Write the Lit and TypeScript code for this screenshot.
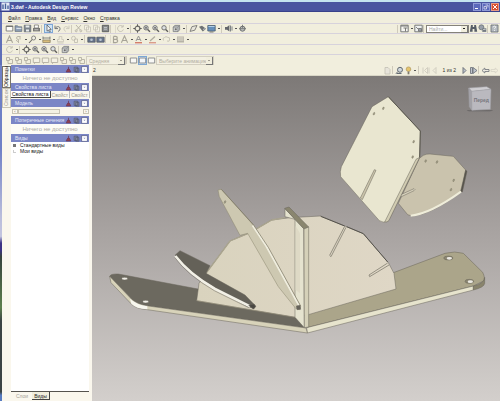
import { LitElement, html, svg, css, nothing } from "lit";
import { customElement, property } from "lit/decorators.js";

const zoomGlyph = (inner: unknown) => svg`<circle cx="4" cy="3.8" r="2.2" fill="#d9dde4" stroke="#555" stroke-width=".9"/><path d="M5.6 5.4 8 7.8" stroke="#444" stroke-width="1.4"/>${inner}`;
const markup = svg`<path d="M1.5 1.5h3v3h-3zM3 4.5v3h4.5v-4H5" fill="none" stroke="#aaa698" stroke-width=".9"/>`;

const glyphs: Record<string, unknown> = {
  page: svg`<path d="M1.2 2h6.6v5H1.2z" fill="#fff" stroke="#666" stroke-width=".9"/><path d="M1.2 2.4h6.6" stroke="#555"/>`,
  open: svg`<path d="M1 7.4V1.8h2.6l1 1h3.2v4.6z" fill="#7f93b0" stroke="#4b5566" stroke-width=".7"/><path d="M2.4 4.4h5" stroke="#dfe6f0"/>`,
  save: svg`<path d="M1.2 1.2h6.6v6.6H1.2z" fill="#66707f" stroke="#444b58" stroke-width=".6"/><path d="M2.6 1.5h3.8v2H2.6zM3 5.4h3v2H3z" fill="#e8ebee"/>`,
  print: svg`<path d="M2.4 1h4v3h-4z" fill="#fff" stroke="#555" stroke-width=".7"/><path d="M1 4h7v3.4H1z" fill="#626262"/><path d="M2.4 5.8h4" stroke="#eee" stroke-width=".7"/>`,
  cursor: svg`<path d="M3 1v6.2l1.4-1.2 1 2 1-.5-1-1.9 1.8-.2z" fill="#fff" stroke="#333" stroke-width=".7"/>`,
  undo: svg`<path d="M2 1.6v3h3M2.2 4.4C4 1.6 7 2.4 7 4.6S5.8 7 5 7.4" fill="none" stroke="#5d6069" stroke-width="1"/>`,
  redo: svg`<path d="M7 1.6v3H4M6.8 4.4C5 1.6 2 2.4 2 4.6S3.200 7 4 7.4" fill="none" stroke="#c9c6ba" stroke-width="1"/>`,
  cut: svg`<path d="M2 1l4.400 5M7 1 2.600 6" stroke="#aaa698" stroke-width=".9"/><circle cx="2.200" cy="6.800" r="1" fill="none" stroke="#aaa698" stroke-width=".8"/><circle cx="6.800" cy="6.800" r="1" fill="none" stroke="#aaa698" stroke-width=".8"/>`,
  copy: svg`<path d="M1.500 1.300h4v4.500h-4zM3.500 3h4v4.800h-4z" fill="#f5f2e6" stroke="#c0bcb0" stroke-width=".8"/>`,
  image: svg`<path d="M1.300 1.300h6.400v6.400H1.300z" fill="#777b80" stroke="#3d4044" stroke-width=".9"/><path d="M3 3.500h3M3 5.200h3" stroke="#c8ccd2" stroke-width=".8"/>`,
  rotate: svg`<path d="M6.800 2.500A3 3 0 1 0 7.400 5.500M7.200 1v2H5" fill="none" stroke="#b9b5a9" stroke-width=".9"/>`,
  orbit: svg`<circle cx="4.500" cy="4.500" r="2.400" fill="none" stroke="#555" stroke-width="1.200"/><path d="M4.500.3v2M4.500 6.700v2M.3 4.500h2M6.700 4.500h2" stroke="#444" stroke-width="1"/>`,
  zoom: zoomGlyph(nothing),
  zoomIn: zoomGlyph(svg`<path d="M2.800 3.800h2.400M4 2.600V5" stroke="#333" stroke-width=".7"/>`),
  zoomFit: zoomGlyph(svg`<path d="M3.200 3h1.700v1.700H3.200z" fill="#555"/>`),
  cube: svg`<path d="M1.200 3 3 1.400h4.600v4.400L6 7.600H1.200z" fill="#c2c6ca" stroke="#65686e" stroke-width=".8"/><path d="M1.200 3H6v4.600M6 3l1.600-1.600" fill="none" stroke="#65686e" stroke-width=".7"/><circle cx="3.800" cy="5.200" r="1" fill="#555"/>`,
  plane: svg`<path d="M1 7.400 3 2.600 8 1.500 5.800 6.200z" fill="#e7e5dc" stroke="#666" stroke-width=".9"/>`,
  part: svg`<path d="M1 2.800 4 1.800l4 3L4.800 7.500 2.600 4.800z" fill="#555b60"/><path d="m5 5.500 2-.8" stroke="#dde" stroke-width=".7"/>`,
  screen: svg`<path d="M.8 1.500h7.400V7H.8z" fill="#4d7fb5" stroke="#31455c" stroke-width=".8"/><path d="M1.500 2.500h6" stroke="#a8cae8"/><path d="M2.500 8h4" stroke="#444" stroke-width=".8"/>`,
  speaker: svg`<path d="M1 3h2l2.400-2v6.500L3 5.800H1z" fill="#4c5058"/><path d="M6.500 1.500v6M8 2.400v4.200" stroke="#5e636c" stroke-width=".9"/>`,
  gear: svg`<circle cx="4.500" cy="4.700" r="2.500" fill="#b5b8ba" stroke="#5a5d60" stroke-width="1"/><path d="M4.500.8v3M1 4.700h7" stroke="#5a5d60" stroke-width=".9"/>`,
  letterGrey: svg`<path d="M1.400 7.800 4.500 1l3.100 6.800M2.600 5.500h3.800" fill="none" stroke="#9b988c" stroke-width="1.100"/>`,
  letterRed: svg`<path d="M2 6 4.500 1 7 6M3 4.500h3" fill="none" stroke="#888" stroke-width="1"/><path d="M1 7.700h7" stroke="#d06a58" stroke-width="1.400"/>`,
  bold: svg`<path d="M2.500 1.400v6.200h2.200q2-.2 2-1.700T4.600 4.300H2.500M2.500 1.400h2q1.800.1 1.800 1.500T4.600 4.300" fill="none" stroke="#9b988c" stroke-width="1.200"/>`,
  para: svg`<path d="M6.500 1.500H4A1.400 1.400 0 0 0 4 4.400h.5V8M6 1.500V4.500M2 5.200l2 1.500" fill="none" stroke="#aaa698" stroke-width=".9"/>`,
  callout: svg`<circle cx="5.600" cy="3" r="2" fill="#f3f1e8" stroke="#666" stroke-width=".9"/><path d="M4.200 4.500 1 8" stroke="#555" stroke-width="1.100"/>`,
  ruler: svg`<path d="M1 1.500v3M8 1.500v3M1 3h7" stroke="#555" stroke-width=".8"/><path d="M.8 5h7.400v2.500H.8z" fill="#d5b56b" stroke="#72674c" stroke-width=".7"/>`,
  stamp: svg`<path d="M3.200 1.500h2.600v3h1.700v2.200h-6V4.500h1.700zM1.500 8h6" fill="none" stroke="#c0bcb0" stroke-width=".8"/>`,
  shape: svg`<circle cx="3.500" cy="3.300" r="2" fill="none" stroke="#b6b2a6" stroke-width=".8"/><path d="M4.500 4h3v3.500h-3z" fill="none" stroke="#b6b2a6" stroke-width=".8"/>`,
  camera: svg`<path d="M.8 2.200h7.400v5H.8z" fill="#4e5f7d" stroke="#333b49" stroke-width=".7"/><circle cx="4.500" cy="4.700" r="1.300" fill="#b5c0d2"/>`,
  pen: svg`<path d="m2 6 5-4.500" stroke="#a5a196" stroke-width="1.200"/><path d="M1 7.700h7" stroke="#d88d7c" stroke-width="1.400"/>`,
  cloud: svg`<path d="M1.500 5.500Q0 3 2.500 2.500 4 .8 5.500 2.300 8.500 2 7.500 5q0 2-2.500 1" fill="none" stroke="#bdb9ad" stroke-width=".9"/>`,
  lines: svg`<path d="M1 1.500h7v6H1z" fill="#aca99e"/><path d="M1.500 3h6M1.500 5h6" stroke="#ece9dc" stroke-width=".8"/>`,
  markup,
  markupBox: svg`<path d="M1.300 2h6.400v4.500H1.300zM2 7.800l1.500-1.300" fill="#f5f2e6" stroke="#aaa698" stroke-width=".9"/>`,
  frame: svg`<path d="M1.300 2h6.400v5H1.300z" fill="#fafafa" stroke="#74777c" stroke-width=".9"/>`,
  layout: svg`<path d="M.8 1.200h7.400v6.600H.8z" fill="#f7f7f5" stroke="#55585c" stroke-width=".9"/><path d="M1 2h7M3.500 4h4M5.500 4v3.500" stroke="#666" stroke-width="1"/>`,
  windows: svg`<path d="M.8 1.200h7.400v6.600H.8z" fill="#eef1f4" stroke="#55585c" stroke-width=".9"/><path d="M2 3l2 2M4.500 4.500h3v2.700h-3z" fill="#8890a0" stroke="#555" stroke-width=".8"/>`,
  binoculars: svg`<path d="M2 1h1.800v2h1.400V1H7l1.200 6.800H5.400V5H3.600v2.800H.8z" fill="#3d4654"/>`,
  layers: svg`<circle cx="3.400" cy="3.300" r="2.500" fill="#8a92a0" stroke="#4b515c" stroke-width=".7"/><path d="M4.300 4.300h4v3.600h-4z" fill="#5f6774"/><path d="M5 5.500h2.600" stroke="#eee" stroke-width=".6"/>`,
  help: svg`<path d="M1 1h7v7H1z" fill="#a9b0ba" stroke="#4f565f" stroke-width=".8"/><path d="M3.200 3.300q.3-1.300 1.500-1.200 1.600.4.700 1.600-.9.600-.9 1.400M4.500 6v.9" fill="none" stroke="#fff" stroke-width=".9"/>`,
  lock: svg`<path d="M2 1.500h3l2 2V8H2z" fill="#e6e3da" stroke="#bbb7ad" stroke-width=".8"/>`,
  find: svg`<circle cx="5" cy="3.800" r="2.500" fill="#cbd3dc" stroke="#4c5560" stroke-width="1"/><path d="M1.500 7.500h5M3 5.500l-2 2" stroke="#4c5560" stroke-width="1"/>`,
  bulb: svg`<circle cx="4.500" cy="3.200" r="2.300" fill="#e3bd5a" stroke="#9b7f3c" stroke-width=".6"/><path d="M3.600 5.500h1.800v2.800H3.600z" fill="#6d675b"/>`,
  first: svg`<path d="M6.500 1.500 3.500 4.500l3 3zM8 1.500v6M2 1.500v6" fill="none" stroke="#c9c5ba" stroke-width=".9"/>`,
  prev: svg`<path d="M6 1.500 3 4.500l3 3z" fill="none" stroke="#c9c5ba" stroke-width=".9"/>`,
  next: svg`<path d="M3 1.500 6 4.500l-3 3z" fill="#b9c0cc" stroke="#4f5663" stroke-width=".9"/>`,
  last: svg`<path d="M1.500 1.500v6h2V1.500zM4 1.500l4 3-4 3z" fill="#b9c0cc" stroke="#4f5663" stroke-width=".8"/>`,
  back: svg`<path d="M1 4.500 3.800 2v1.500H8v2H3.800V7z" fill="#eceae2" stroke="#555a66" stroke-width=".8"/>`,
  forward: svg`<path d="M8 4.500 5.200 2v1.500H1v2h4.200V7z" fill="none" stroke="#d2cec2" stroke-width=".8"/>`,
  pin: svg`<path d="M4.500 1v3M1.500 7.600 3.500 4h2l2 3.600z" fill="#93414f" stroke="#6d3a5a" stroke-width="1"/>`,
  sheet: svg`<path d="M1.500 1.500h4.500v5.500h-4.500zM3.500 3h4v5h-4z" fill="#8a8fa2" stroke="#505672" stroke-width=".9"/>`,
  drop: svg`<path d="M.8.800h7.400v7.400H.8z" fill="#fff" stroke="#434a75" stroke-width=".8"/><path d="M3 3.500h3L4.500 5.300z" fill="#8a8fb5"/>`,
  app: svg`<path d="M.5.500h8v8h-8z" fill="#e5ebf6"/><path d="M2 7V2.500M4.500 7V1.500M7 7V3.500" stroke="#46639c" stroke-width="1.400"/>`,
};

@customElement("tool-icon")
class ToolIcon extends LitElement {
  @property() name = "page";
  static styles = css`
    :host { display: block; flex: none; width: 9px; height: 9px; }
    svg { display: block; width: 100%; height: 100%; }
  `;
  render() {
    return html`<svg viewBox="0 0 9 9" aria-hidden="true">${glyphs[this.name] ?? nothing}</svg>`;
  }
}

const row1 = "page open save print | cursor* undo redo | cut copy copy image || rotate . | orbit zoomIn zoomFit zoom | cube . | plane part screen . | speaker . gear";
const row2 = "letterGrey para . callout . ruler . stamp . shape . | camera camera || bold letterGrey . letterRed . pen . cloud . lines .";
const row3 = "rotate . | orbit zoomIn zoomFit zoom | cube .";

@customElement("app-root")
class AppRoot extends LitElement {
  static styles = css`
    :host {
      display: flex; flex-direction: column; min-height: 100vh; box-sizing: border-box;
      background: #f1eedd; color: #33322e;
      font-family: "Liberation Sans", Arial, sans-serif; font-size: 5px; line-height: 8px;
    }
    * { box-sizing: border-box; }
    button, select, input { font: inherit; color: inherit; margin: 0; padding: 0; border: 0; border-radius: 0; background: none; }
    button { display: block; flex: none; }
    .title {
      display: flex; align-items: center; gap: 1px; height: 12px; padding: 0 1px 0 1px;
      background: #4a55a0; border-top: 2px solid #c5e4f0; border-bottom: 1px solid #39418a; color: #fff;
    }
    h1 { flex: 1; margin: 0; font-size: 5px; font-weight: bold; }
    .win { width: 8px; height: 8px; border: 1px solid #8f9ad6; background: #5a69bb; }
    .win svg { display: block; width: 6px; height: 6px; }
    .close { background: #d9502f; border-color: #e79a85; }
    .main { display: flex; flex-direction: column; border-left: 2px solid #5f6fb8; }
    .menu { display: flex; gap: 5px; height: 11px; padding: 1px 6px 0 6px; }
    .menu span { text-decoration: underline; }
    .row { display: flex; align-items: center; height: 10px; padding: 0 1px 0 3px; border-top: 1px solid #d7d2dc; }
    .row tool-icon, .bar tool-icon { opacity: 0.85; }
    .tall { height: 11px; }
    .push { flex: 1; }
    .sep { flex: none; width: 3px; height: 8px; border-left: 1px solid #cfcabb; }
    .wide { width: 6px; border-right: 1px solid #dedacb; }
    .dot { flex: none; width: 5px; height: 9px; display: grid; place-items: center; }
    .dot::before { content: ""; width: 2px; height: 1px; background: #555; }
    .sel { background: #cfe3f5; box-shadow: inset 0 0 0 1px #7da7d4; }
    .pick {
      appearance: none; height: 9px; width: 40px; padding-left: 2px; color: #b1ad9d;
      border: 1px solid #d3cfc0; background: #f3f0e2;
    }
    .combo { position: relative; flex: none; display: flex; }
    .combo::after {
      content: ""; position: absolute; right: 1px; top: 1px; width: 6px; height: 7px;
      background: linear-gradient(#a09c90, #a09c90) center / 2px 1px no-repeat #f1eedd;
      border-right: 1px solid #777; border-bottom: 1px solid #777;
    }
    .search::after { height: 6px; background-image: linear-gradient(#222, #222); }
    .long .pick { width: 58px; }
    .combo .find { width: 43px; height: 8px; padding-left: 2px; background: #fff; border: 1px solid #85827a; outline: 0; }
    .find::placeholder { color: #aaa; opacity: 1; }
    .work { flex: 1; display: grid; grid-template-columns: 92px minmax(0, 1fr); }
    .side {
      display: grid; grid-template-columns: 9px minmax(0, 1fr); padding-right: 3px; background: #faf7ed;
      border-style: solid;
      border-image: linear-gradient(#6f80c6 0 25%, #b9bddb 45%, #c3c5df 51%, #3c3385 53% 55%, #37433c 57%, #5d7f4e 72%, #3c4444 76% 97%, #577bc0 98%) 1;
      border-width: 0 0 0 2px;
    }
    .vtabs { display: flex; flex-direction: column; padding-top: 1px; }
    .vtabs button { width: 9px; height: 20px; border: 1px solid #c9c5b5; writing-mode: vertical-rl; transform: rotate(180deg); line-height: 7px; color: #99968d; }
    .vtabs .on { height: 22px; color: #222; border-color: #77746a; background: #fdfbf3; }
    .panels { display: flex; flex-direction: column; min-width: 0; }
    h2 {
      display: flex; align-items: center; margin: 0; height: 8px; padding: 0 1px 0 4px; gap: 1px;
      font-size: 5px; font-weight: normal; color: #e6e8f8; background: #7b86c6;
    }
    h2 span { flex: 1; white-space: nowrap; }
    h2 tool-icon { width: 7px; height: 7px; }
    .none { margin: 0; height: 10px; padding-top: 1px; text-align: center; font-size: 6px; color: #aeaba3; background: #fdfcf6; }
    .tabs { display: flex; height: 8px; line-height: 6px; white-space: nowrap; color: #99968e; }
    .tabs button { height: 7px; padding: 0 1px; border-right: 1px solid #bbb; }
    .tabs .on { color: #111; background: #fff; border-right: 1px solid #444; border-bottom: 1px solid #444; }
    .scroll { display: flex; align-items: center; height: 9px; padding: 2px 0 2px 1px; }
    .scroll button { width: 6px; height: 5px; line-height: 3px; border: 1px solid #c7c3b4; color: #555; font-size: 4px; }
    .thumb { width: 42px; height: 5px; border: 1px solid #c7c3b4; background: #f4f1e3; }
    .tree { flex: 1; list-style: none; margin: 0; padding: 0 0 0 2px; background: #fff; border-bottom: 1px solid #55534e; color: #111; line-height: 6px; }
    .tree li { display: flex; gap: 4px; align-items: center; }
    .box { width: 3px; height: 3px; background: #777; }
    .twig { width: 3px; height: 3px; border-left: 1px solid #ccc; border-bottom: 1px solid #ccc; }
    .foot { display: flex; height: 9px; padding-left: 3px; gap: 2px; color: #a5a299; }
    .foot button { height: 8px; padding: 0 2px; }
    .foot .on { color: #222; background: #f1eedd; border-right: 1px solid #444; border-bottom: 1px solid #444; }
    .doc { display: flex; flex-direction: column; min-width: 0; }
    .bar { display: flex; align-items: center; height: 11px; padding: 0 1px; border-bottom: 1px solid #d9d6c6; }
    .page { padding: 0 4px; white-space: nowrap; }
    .view { flex: 1; position: relative; background: linear-gradient(#7d7977, #a8a3a1 48%, #d3cfcc); }
    .model { position: absolute; inset: 0; width: 100%; height: 100%; }
  `;

  private tool(name: string) {
    const on = name.endsWith("*");
    const id = on ? name.slice(0, -1) : name;
    return html`<button class=${on ? "sel" : ""} aria-label=${id}><tool-icon name=${id}></tool-icon></button>`;
  }

  private tools(spec: string) {
    return spec.split(" ").map((t) =>
      t === "|" ? html`<span class="sep"></span>`
      : t === "||" ? html`<span class="sep wide"></span>`
      : t === "." ? html`<span class="dot"></span>`
      : this.tool(t));
  }

  private head(text: string) {
    return html`<h2><span>${text}</span><tool-icon name="pin"></tool-icon><tool-icon name="sheet"></tool-icon><tool-icon name="drop"></tool-icon></h2>`;
  }

  private hole(x: number, y: number) {
    return svg`<ellipse cx=${x} cy=${y} rx="2" ry="4" transform="rotate(20 ${x} ${y})" fill="#aaa58f" stroke="#77735f" stroke-width="1.500"/>`;
  }

  private model() {
    return html`<svg class="model" viewBox="6 48 1224 975" role="img" aria-label="3D">
      <defs>
        <linearGradient id="fan" x1="0" x2="1"><stop offset="0" stop-color="#d9d3be"/><stop offset="1" stop-color="#dfd7c6"/></linearGradient>
        <linearGradient id="shade" x1="0" y1="0" x2="0" y2="1"><stop offset="0" stop-color="#5a5758" stop-opacity=".8"/><stop offset="1" stop-color="#777" stop-opacity="0"/></linearGradient>
      </defs>
      <g stroke="#68655a" stroke-width="1.500" stroke-linejoin="round">
        <path d="M650 803 655 760 905 640 1065 580Q1095 572 1120 580L1178 637Q1187 655 1180 663L1150 678Z" fill="#aba58a"/>
        <path d="M650 803 1150 678 1150 690 652 819Z" fill="#e7e4cd"/>
        <path d="M1150 678Q1184 670 1184 652V670Q1183 682 1150 690Z" fill="#89846c"/>
        <ellipse cx="1075" cy="594" rx="14" ry="6" fill="#8b8671"/><ellipse cx="1078" cy="595" rx="8" ry="4" fill="#eceae4" stroke="none"/>
        <ellipse cx="1138" cy="664" rx="13" ry="6" fill="#8b8671"/><ellipse cx="1141" cy="665" rx="8" ry="4" fill="#eceae4" stroke="none"/>

        <path d="M59 649Q62 641 85 642L340 690 617 772 645 803 175 738Q140 732 125 718Z" fill="#6c695f"/>
        <path d="M59 649 125 718Q140 734 175 738L648 804 652 819 172 749Q138 746 125 733L63 668Z" fill="#d8d3ba"/>
        <path d="M120 716Q140 734 172 739V748Q138 746 124 731Z" fill="#f8f7ef" stroke="none"/>
        <ellipse cx="104" cy="656" rx="9" ry="4" fill="#f0eee6"/><ellipse cx="167" cy="725" rx="9" ry="4" fill="#f0eee6"/>

        <path d="M348 640 420 543 480 518 545 480 600 473 692 468 820 521 895 608 912 640 918 687 655 764 617 772 320 722 327 670Z" fill="url(#fan)"/>
        <path d="M348 640 420 543 480 518 545 480 585 473" fill="none" stroke="#aaa58f" stroke-width="4"/>
        <path d="M692 469 764 498M770 500 820 521 893 606" fill="none" stroke="#55534d" stroke-width="3"/>
        <path d="M764 499 719 586M768 502 723 590M719 586 723 590M893 609 837 645M897 615 839 650M837 645 839 650" fill="none" stroke="#706c60" stroke-width="2"/>
        <path d="M320 722 615 772" fill="none" stroke="#9e9981"/>

        <path d="M255 586 270 572 360 617 348 640 465 705 497 738 492 746 470 738 375 685 310 640Z" fill="#646158"/>
        <path d="M256 588Q295 640 375 687L480 739" fill="none" stroke="#f2f0e6" stroke-width="8"/>
        <path d="M254 592Q292 645 373 692L478 744" fill="none"/>
        <path d="M476 736 492 732 497 740 490 747Z" fill="#4a4843"/>

        <path d="M585 446 641 506 643 803 615 772V478L585 470Z" fill="#e5e3cf"/>
        <path d="M584 445 597 441 656 501 642 507Z" fill="#8a866f"/>
        <path d="M642 507 656 501V801L643 803Z" fill="#d5d1b9"/>
        <path d="M617 498 630 520V700L617 690Z" fill="#ded9c5" stroke="none"/>

        <path d="M384 390 394 388 490 495 535 568 632 740 628 749 617 745 565 680 473 520 450 526 388 410Z" fill="#cdc8b1" stroke="#8a866f"/>
        <path d="M488 496 530 560 628 738" fill="none" stroke="#efedde" stroke-width="6"/>
        <path d="M394 388 490 494 535 562 632 738" fill="none" stroke="#77735f" stroke-width="2"/>
        <path d="M619 738 630 736 632 748 621 749Z" fill="#66635a"/>
        ${this.hole(405, 426)}

        <path d="M1000 286Q1010 281 1020 282L1090 289 1127 330 1115 395Q1020 466 965 468L953 464 925 430 988 295Z" fill="#cac3ad"/>
        <path d="M1127 330 1131 334 1117 396 1112 393Z" fill="#55524b"/>
        <path d="M1113 395Q1020 462 962 467" fill="none" stroke="#efedda" stroke-width="6"/>
        <path d="M930 405 972 386Q978 389 972 392L930 412" fill="#d8d2bd"/>
        ${this.hole(1007, 303)}${this.hole(1041, 306)}${this.hole(1091, 361)}${this.hole(1083, 389)}
        <path d="M846 140 895 110 991 213 989 292 895 483Q882 491 868 482L752 350Q749 335 754 320Z" fill="#e9e6d0"/>
        <path d="M989 292 978 298 884 486Q892 488 897 481Z" fill="#d1ccb2"/>
        <path d="M895 110 991 213 989 292" fill="none" stroke="#58564d" stroke-width="3"/>
        <path d="M853 329 811 414 817 419 858 331Z" fill="#c9c3aa"/>
        ${this.hole(852, 161)}${this.hole(880, 145)}${this.hole(971, 245)}${this.hole(968, 291)}
      </g>
      <path d="M1130 150H1210L1196 158H1140Z" fill="url(#shade)"/>
      <g stroke="#a3a2a8" stroke-width="1.500">
        <path d="M1136 84 1190 80 1203 88 1145 94Z" fill="#cfced2"/>
        <path d="M1136 84 1145 94 1146 151 1138 140Z" fill="#a2a1a7"/>
        <path d="M1145 94 1203 88 1201 148 1146 151Z" fill="#bab9bf"/>
      </g>
      <text x="1174" y="127" text-anchor="middle" font-size="15" font-weight="bold" fill="#77767d">Перед</text>
    </svg>`;
  }

  render() {
    const menus = ["Файл", "Правка", "Вид", "Сервис", "Окно", "Справка"];
    return html`
      <header class="title">
        <tool-icon name="app"></tool-icon>
        <h1>3.dwf - Autodesk Design Review</h1>
        <button class="win" aria-label="Свернуть"><svg viewBox="0 0 6 6"><path d="M1 4.500h3" stroke="#fff"/></svg></button>
        <button class="win" aria-label="Развернуть"><svg viewBox="0 0 6 6"><path d="M1 2.500h2.500V5H1zM2.500 1H5v2.500" fill="none" stroke="#dde" stroke-width=".8"/></svg></button>
        <button class="win close" aria-label="Закрыть"><svg viewBox="0 0 6 6"><path d="m1 1 4 4M5 1 1 5" stroke="#fff"/></svg></button>
      </header>
      <div class="main">
        <nav class="menu">${menus.map((m) => html`<button><span>${m[0]}</span>${m.slice(1)}</button>`)}</nav>
        <div class="row">
          ${this.tools(row1)}<span class="push"></span>${this.tools("| layout . windows |")}
          <div class="combo search"><input class="find" aria-label="Найти" placeholder="Найти..." /></div>
          ${this.tools("binoculars layers | help")}
        </div>
        <div class="row tall">${this.tools(row2)}</div>
        <div class="row">${this.tools(row3)}</div>
        <div class="row tall">
          ${this.tools("markup markup markup markupBox markupBox markupBox markup markup markup")}
          <div class="combo"><select class="pick" aria-label="Размер"><option>Средняя</option></select></div>
          <span class="sep"></span>
          ${this.tools("frame frame* frame")}
          <div class="combo long"><select class="pick" aria-label="Анимация"><option>Выберите анимацию</option></select></div>
        </div>
      </div>
      <div class="work">
        <aside class="side">
          <div class="vtabs"><button class="on">Образцы</button><button>Список</button></div>
          <div class="panels">
            ${this.head("Пометки")}
            <p class="none">Ничего не доступно</p>
            ${this.head("Свойства листа")}
            <div class="tabs"><button class="on">Свойства листа</button><button>Свойст</button><button>Свойст</button></div>
            ${this.head("Модель")}
            <div class="scroll"><button aria-label="Влево">‹</button><span class="thumb"></span><span class="push"></span><button aria-label="Вправо">›</button></div>
            ${this.head("Поперечные сечения")}
            <p class="none">Ничего не доступно</p>
            ${this.head("Виды")}
            <ul class="tree">
              <li><span class="box"></span>Стандартные виды</li>
              <li><span class="twig"></span>Мои виды</li>
            </ul>
            <div class="foot"><button>Слои</button><button class="on">Виды</button></div>
          </div>
        </aside>
        <main class="doc">
          <div class="bar">
            <span>2</span><span class="push"></span>
            ${this.tools("lock | find bulb . | first prev")}
            <span class="page">1 из 2</span>
            ${this.tools("next last | back forward")}
          </div>
          <div class="view">${this.model()}</div>
        </main>
      </div>
    `;
  }
}
